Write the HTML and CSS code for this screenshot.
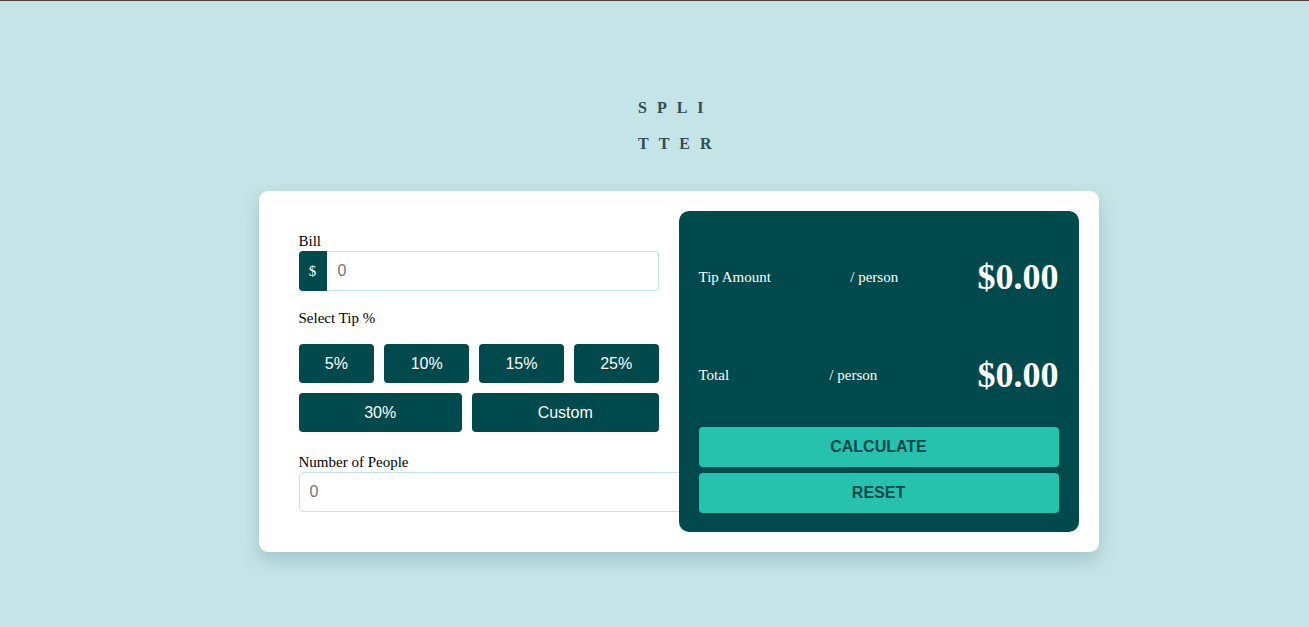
FILE: index.html
```html
<!DOCTYPE html>
<html lang="en">
<head>
<meta charset="utf-8">
<title>Splitter</title>
<link rel="stylesheet" href="styles.css">
</head>
<body>
<div class="page">
  <h1 class="brand">SPLITTER</h1>
  <main class="card">
    <section class="inputs">
      <label class="label">Bill</label>
      <div class="bill">
        <span class="prefix">$</span>
        <input class="field bill-field" type="text" placeholder="0">
      </div>
      <p class="label tip-label">Select Tip %</p>
      <div class="tips">
        <button class="tip">5%</button>
        <button class="tip">10%</button>
        <button class="tip">15%</button>
        <button class="tip">25%</button>
        <button class="tip">30%</button>
        <button class="tip">Custom</button>
      </div>
      <label class="label people-label">Number of People</label>
      <input class="field people-field" type="text" placeholder="0">
    </section>
    <section class="results">
      <div class="row row-tip">
        <span class="row-name">Tip Amount</span>
        <span class="row-unit">/ person</span>
        <span class="amount">$0.00</span>
      </div>
      <div class="row row-total">
        <span class="row-name">Total</span>
        <span class="row-unit">/ person</span>
        <span class="amount">$0.00</span>
      </div>
      <button class="action calc">CALCULATE</button>
      <button class="action reset">RESET</button>
    </section>
  </main>
</div>
</body>
</html>
```

FILE: styles.css
```css
html, body {
  margin: 0;
  padding: 0;
}
body {
  background: #c5e4e7;
  font-family: "Liberation Serif", "Times New Roman", serif;
  border-top: 1px solid #4b4141;
  min-height: 626px;
}
.page {
  padding: 89px 0 0 48px;
}
.brand {
  margin: 0 0 29px calc(50% - 40.5px);
  width: 88px;
  font-family: "Liberation Serif", serif;
  font-size: 16px;
  font-weight: bold;
  letter-spacing: 10px;
  line-height: 36px;
  color: #2f4f4f;
  word-break: break-all;
}
.card {
  width: 840px;
  box-sizing: border-box;
  margin: 0 auto;
  background: #fff;
  border-radius: 9px;
  padding: 20px 20px 20px 40px;
  display: flex;
  gap: 20px;
  box-shadow: 0 8px 18px rgba(60, 110, 115, 0.25);
}
.inputs {
  width: 360px;
  padding: 20px 0;
  display: flex;
  flex-direction: column;
  font-size: 15px;
}
.label {
  display: block;
  margin: 0;
  line-height: 20px;
  color: #000;
}
.bill {
  display: flex;
  height: 40px;
}
.prefix {
  width: 28px;
  background: #00494d;
  color: #fff;
  border-radius: 4px 0 0 4px;
  display: flex;
  align-items: center;
  justify-content: center;
  font-size: 15px;
}
.field {
  box-sizing: border-box;
  height: 40px;
  border: 1px solid #c5e4e7;
  border-radius: 0 4px 4px 0;
  font-family: "Liberation Sans", Arial, sans-serif;
  font-size: 16px;
  padding: 0 10px;
  outline: none;
  background: #fff;
}
.field::placeholder {
  color: #757575;
}
.bill-field {
  flex: 1;
  border-left: none;
  padding-left: 11px;
}
.tip-label {
  margin-top: 17px;
}
.tips {
  margin-top: 16px;
  display: flex;
  flex-wrap: wrap;
  gap: 10px;
}
.tip {
  flex: 1 1 auto;
  height: 39px;
  border: none;
  border-radius: 4px;
  background: #00494d;
  color: #fff;
  font-family: "Liberation Sans", Arial, sans-serif;
  font-size: 16px;
  padding: 0 26px;
}
.people-label {
  margin-top: 20px;
}
.people-field {
  width: 400px;
  border-radius: 4px;
  padding-left: 10px;
}
.results {
  position: relative;
  width: 400px;
  box-sizing: border-box;
  background: #00494d;
  border-radius: 10px;
  padding: 46px 20px 19px;
  display: flex;
  flex-direction: column;
  color: #fff;
}
.row {
  height: 40px;
  display: flex;
  align-items: center;
  justify-content: space-between;
  font-size: 15px;
}
.row-total {
  margin-top: 58px;
}
.amount {
  font-size: 36px;
  font-weight: bold;
}
.action {
  height: 40px;
  border: none;
  border-radius: 4px;
  background: #26c2ae;
  color: #00494d;
  font-family: "Liberation Sans", Arial, sans-serif;
  font-size: 16px;
  font-weight: bold;
}
.calc {
  margin-top: 32px;
}
.reset {
  margin-top: 6px;
}
```
